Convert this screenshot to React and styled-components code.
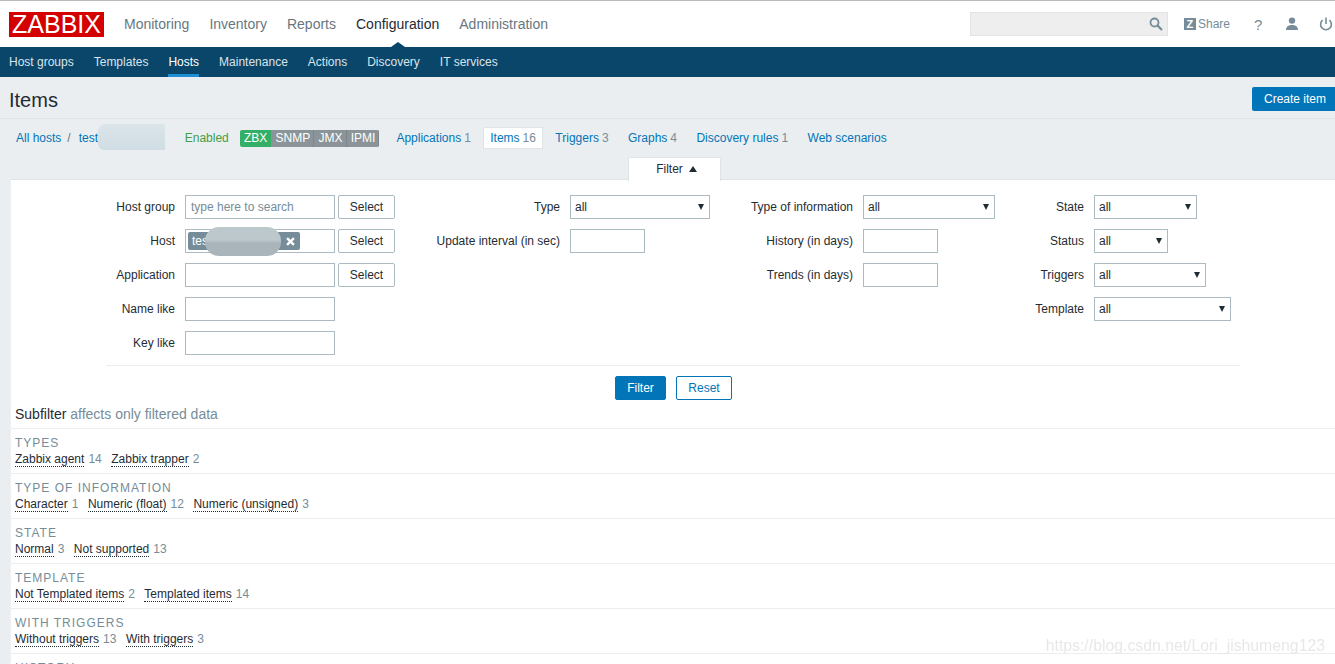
import styled, {createGlobalStyle} from 'styled-components'

const GlobalStyle = createGlobalStyle`
  html, body {
    margin: 0;
    height: 664px;
    overflow: hidden;
    background: #ebeef0;
    font-family: "Liberation Sans", Arial, sans-serif;
    font-size: 12px;
    color: #1f2c33;
  }
`

const mainNav = [
  {label: 'Monitoring'},
  {label: 'Inventory'},
  {label: 'Reports'},
  {label: 'Configuration', active: true},
  {label: 'Administration'},
]

const subNav = ['Host groups', 'Templates', 'Hosts', 'Maintenance', 'Actions', 'Discovery', 'IT services']

const hostTabs = [
  {label: 'Applications', count: 1},
  {label: 'Items', count: 16, active: true},
  {label: 'Triggers', count: 3},
  {label: 'Graphs', count: 4},
  {label: 'Discovery rules', count: 1},
  {label: 'Web scenarios'},
]

const subfilters = [
  {title: 'Types', items: [['Zabbix agent', 14], ['Zabbix trapper', 2]]},
  {title: 'Type of information', items: [['Character', 1], ['Numeric (float)', 12], ['Numeric (unsigned)', 3]]},
  {title: 'State', items: [['Normal', 3], ['Not supported', 13]]},
  {title: 'Template', items: [['Not Templated items', 2], ['Templated items', 14]]},
  {title: 'With triggers', items: [['Without triggers', 13], ['With triggers', 3]]},
  {title: 'History', items: []},
]

const SearchIcon = () => (
  <svg width="14" height="14" viewBox="0 0 14 14" fill="none" stroke="#768d99" strokeWidth="1.8">
    <circle cx="5.5" cy="5.5" r="4" />
    <path d="M8.6 8.6 L13 13" strokeWidth="2.2" />
  </svg>
)

const UserIcon = () => (
  <svg width="14" height="14" viewBox="0 0 14 14" fill="#768d99">
    <circle cx="7" cy="3.6" r="3.2" />
    <path d="M1 13 C1 9.4 3.6 8 7 8 C10.4 8 13 9.4 13 13 Z" />
  </svg>
)

const PowerIcon = () => (
  <svg width="14" height="14" viewBox="0 0 14 14" fill="none" stroke="#768d99" strokeWidth="1.6">
    <path d="M3.6 3.2 A5.4 5.4 0 1 0 10.4 3.2" />
    <path d="M7 0.5 V7" />
  </svg>
)

const CloseIcon = () => (
  <svg width="9" height="9" viewBox="0 0 10 10" stroke="#ffffff" strokeWidth="2.6">
    <path d="M1.2 1.2 L8.8 8.8 M8.8 1.2 L1.2 8.8" />
  </svg>
)

const App = () => (
  <Page>
    <GlobalStyle />
    <TopBar>
      <Logo>ZABBIX</Logo>
      <MainNav>
        {mainNav.map(item => (
          <MainNavItem key={item.label} $active={item.active}>
            {item.label}
          </MainNavItem>
        ))}
      </MainNav>
      <TopTools>
        <SearchBox>
          <SearchIcon />
        </SearchBox>
        <ShareLink>
          <ShareMark>Z</ShareMark>
          Share
        </ShareLink>
        <HelpLink>?</HelpLink>
        <ToolIcon $left={23}>
          <UserIcon />
        </ToolIcon>
        <ToolIcon $left={20}>
          <PowerIcon />
        </ToolIcon>
      </TopTools>
    </TopBar>

    <SubNav>
      {subNav.map(label => (
        <SubNavItem key={label} $active={label === 'Hosts'}>
          {label}
        </SubNavItem>
      ))}
    </SubNav>

    <Header>
      <Title>Items</Title>
      <CreateButton>Create item</CreateButton>
    </Header>

    <Breadcrumbs>
      <Link>All hosts</Link>
      <Slash>/</Slash>
      <HostCrumb>
        <Link>test</Link>
        <CrumbSmudge />
      </HostCrumb>
      <EnabledText>Enabled</EnabledText>
      <Badges>
        <Badge $on>ZBX</Badge>
        <Badge>SNMP</Badge>
        <Badge>JMX</Badge>
        <Badge>IPMI</Badge>
      </Badges>
      <HostTabs>
        {hostTabs.map(tab => (
          <HostTab key={tab.label} $active={tab.active}>
            {tab.label}
            {tab.count && <TabCount>{tab.count}</TabCount>}
          </HostTab>
        ))}
      </HostTabs>
    </Breadcrumbs>

    <FilterTabRow>
      <FilterTab>
        Filter
        <UpCaret />
      </FilterTab>
    </FilterTabRow>

    <Panel>
      <FilterForm>
        <FormColumn $label={69} $indent={95} $width={289}>
          <Label>Host group</Label>
          <ControlRow>
            <TextInput placeholder="type here to search" readOnly />
            <SelectButton>Select</SelectButton>
          </ControlRow>
          <Label>Host</Label>
          <ControlRow>
            <ChipInput>
              <Chip>
                tes
                <CloseIcon />
              </Chip>
              <ChipSmudge />
            </ChipInput>
            <SelectButton>Select</SelectButton>
          </ControlRow>
          <Label>Application</Label>
          <ControlRow>
            <TextInput readOnly />
            <SelectButton>Select</SelectButton>
          </ControlRow>
          <Label>Name like</Label>
          <ControlRow>
            <TextInput readOnly />
          </ControlRow>
          <Label>Key like</Label>
          <ControlRow>
            <TextInput readOnly />
          </ControlRow>
        </FormColumn>

        <FormColumn $label={165} $width={315}>
          <Label>Type</Label>
          <ControlRow>
            <SelectBox $w={140}>all</SelectBox>
          </ControlRow>
          <Label>Update interval (in sec)</Label>
          <ControlRow>
            <TextInput $w={75} readOnly />
          </ControlRow>
        </FormColumn>

        <FormColumn $label={143} $width={285}>
          <Label>Type of information</Label>
          <ControlRow>
            <SelectBox $w={132}>all</SelectBox>
          </ControlRow>
          <Label>History (in days)</Label>
          <ControlRow>
            <TextInput $w={75} readOnly />
          </ControlRow>
          <Label>Trends (in days)</Label>
          <ControlRow>
            <TextInput $w={75} readOnly />
          </ControlRow>
        </FormColumn>

        <FormColumn $label={89} $width={236}>
          <Label>State</Label>
          <ControlRow>
            <SelectBox $w={103}>all</SelectBox>
          </ControlRow>
          <Label>Status</Label>
          <ControlRow>
            <SelectBox $w={74}>all</SelectBox>
          </ControlRow>
          <Label>Triggers</Label>
          <ControlRow>
            <SelectBox $w={112}>all</SelectBox>
          </ControlRow>
          <Label>Template</Label>
          <ControlRow>
            <SelectBox $w={137}>all</SelectBox>
          </ControlRow>
        </FormColumn>
      </FilterForm>

      <FormDivider />

      <FormButtons>
        <FilterButton>Filter</FilterButton>
        <ResetButton>Reset</ResetButton>
      </FormButtons>

      <SubfilterHeading>
        Subfilter <SubfilterHint>affects only filtered data</SubfilterHint>
      </SubfilterHeading>

      {subfilters.map(group => (
        <SubfilterRow key={group.title}>
          <SubfilterTitle>{group.title}</SubfilterTitle>
          <SubfilterItems>
            {group.items.map(([label, count]) => (
              <span key={label}>
                <SubfilterLink>{label}</SubfilterLink>
                <Count>{count}</Count>
              </span>
            ))}
          </SubfilterItems>
        </SubfilterRow>
      ))}
    </Panel>

    <Watermark>https://blog.csdn.net/Lori_jishumeng123</Watermark>
  </Page>
)

export default App

const Page = styled.div`
  position: relative;
  height: 664px;
  overflow: hidden;
`

const TopBar = styled.header`
  display: flex;
  align-items: center;
  height: 46px;
  box-sizing: content-box;
  border-top: 1px solid #bbbbbb;
  background: #ffffff;
  padding-left: 9px;
`

const Logo = styled.div`
  width: 95px;
  height: 25px;
  margin-top: 1px;
  background: #d40000;
  color: #ffffff;
  font-size: 25px;
  line-height: 25px;
  text-align: center;
`

const MainNav = styled.nav`
  display: flex;
  gap: 20px;
  margin-left: 20px;
`

const MainNavItem = styled.span`
  position: relative;
  font-size: 14px;
  line-height: 46px;
  color: ${p => (p.$active ? '#1f2c33' : '#68777f')};

  ${p =>
    p.$active &&
    `
    &::after {
      content: '';
      position: absolute;
      left: 50%;
      bottom: 0;
      margin-left: -7px;
      border-left: 7px solid transparent;
      border-right: 7px solid transparent;
      border-bottom: 5px solid #0a466a;
    }
  `}
`

const TopTools = styled.div`
  display: flex;
  align-items: center;
  margin-left: auto;
  padding-right: 2px;
`

const SearchBox = styled.div`
  display: flex;
  align-items: center;
  justify-content: flex-end;
  box-sizing: border-box;
  width: 198px;
  height: 24px;
  padding-right: 4px;
  background: #eeeeee;
  border: 1px solid #e3e3e3;
`

const ShareLink = styled.span`
  display: flex;
  align-items: center;
  margin-left: 16px;
  color: #768d99;
`

const ShareMark = styled.span`
  width: 12px;
  height: 12px;
  margin-right: 2px;
  background: #768d99;
  color: #ffffff;
  font-size: 11px;
  font-weight: 700;
  line-height: 12px;
  text-align: center;
`

const HelpLink = styled.span`
  margin-left: 24px;
  width: 8px;
  color: #768d99;
  font-size: 15px;
`

const ToolIcon = styled.span`
  display: flex;
  margin-left: ${p => p.$left}px;
`

const SubNav = styled.nav`
  display: flex;
  gap: 20px;
  height: 30px;
  padding-left: 9px;
  background: #0a466a;
`

const SubNavItem = styled.span`
  line-height: 30px;
  color: ${p => (p.$active ? '#ffffff' : '#d9e4ea')};
  box-shadow: ${p => (p.$active ? 'inset 0 -3px 0 #1f8fd4' : 'none')};
`

const Header = styled.div`
  display: flex;
  align-items: center;
  justify-content: space-between;
  height: 41px;
  padding-left: 9px;
  border-bottom: 1px solid #dfe4e7;
`

const Title = styled.h1`
  margin: 5px 0 0;
  font-size: 20px;
  font-weight: 400;
  color: #1f2c33;
`

const CreateButton = styled.button`
  box-sizing: border-box;
  width: 83px;
  height: 24px;
  margin-top: 2px;
  padding: 0 0 0 3px;
  background: #0275b8;
  border: 0;
  border-radius: 2px 0 0 2px;
  color: #ffffff;
  font: 12px "Liberation Sans", Arial, sans-serif;
`

const Breadcrumbs = styled.div`
  display: flex;
  align-items: center;
  height: 38px;
  padding-left: 16px;
`

const Link = styled.span`
  color: #0275b8;
`

const Slash = styled.span`
  margin: 0 8px 0 6px;
  color: #68777f;
`

const HostCrumb = styled.div`
  position: relative;
  width: 86px;
`

const CrumbSmudge = styled.div`
  position: absolute;
  left: 19px;
  top: -7px;
  width: 67px;
  height: 26px;
  background: linear-gradient(#dbe5ea, #d0dde4);
  border-radius: 8px 2px 0 6px;
`

const EnabledText = styled.span`
  margin-left: 20px;
  color: #429e47;
`

const Badges = styled.div`
  display: flex;
  height: 17px;
  margin-left: 11px;
  border-radius: 2px;
  overflow: hidden;
`

const Badge = styled.span`
  padding: 0 4px 0 4.25px;
  background: ${p => (p.$on ? '#34af67' : '#8b9599')};
  box-shadow: inset -1px 0 0 ${p => (p.$on ? '#34af67' : '#7d868c')};
  color: #ffffff;
  line-height: 17px;
`

const HostTabs = styled.div`
  display: flex;
  align-items: center;
  gap: 5.4px;
  margin-left: 10px;
`

const HostTab = styled.span`
  box-sizing: border-box;
  height: 22px;
  padding: 0 6px;
  line-height: 20px;
  color: #0275b8;
  background: ${p => (p.$active ? '#ffffff' : 'transparent')};
  border: 1px solid ${p => (p.$active ? '#dfe4e7' : 'transparent')};
`

const Count = styled.span`
  margin-left: 4px;
  color: #768d99;
`

const TabCount = styled(Count)`
  margin-left: 3px;
`

const FilterTabRow = styled.div`
  position: relative;
  z-index: 1;
  display: flex;
  height: 23px;
  padding-left: 628px;
  margin-bottom: -1px;
`

const FilterTab = styled.div`
  display: flex;
  align-items: center;
  justify-content: center;
  box-sizing: border-box;
  width: 93px;
  height: 24px;
  padding: 0 0 2px 4px;
  background: #ffffff;
  border: 1px solid #dfe4e7;
  border-bottom: 0;
  border-radius: 2px 2px 0 0;
`

const UpCaret = styled.i`
  margin-left: 6px;
  border-left: 4px solid transparent;
  border-right: 4px solid transparent;
  border-bottom: 6px solid #1f2c33;
`

const Panel = styled.section`
  margin-left: 10px;
  height: 500px;
  background: #ffffff;
  border-top: 1px solid #dfe4e7;
  border-left: 1px solid #eef1f3;
`

const FilterForm = styled.div`
  display: flex;
  align-items: flex-start;
  padding-top: 15px;
`

const FormColumn = styled.div`
  display: grid;
  grid-template-columns: ${p => p.$label}px 1fr;
  column-gap: 10px;
  row-gap: 10px;
  width: ${p => p.$width}px;
  margin-left: ${p => p.$indent || 0}px;
  flex: none;
`

const Label = styled.label`
  height: 24px;
  line-height: 24px;
  text-align: right;
  white-space: nowrap;
`

const ControlRow = styled.div`
  display: flex;
  gap: 3px;
  height: 24px;
`

const TextInput = styled.input`
  box-sizing: border-box;
  width: ${p => p.$w || 150}px;
  height: 24px;
  padding: 0 5px;
  border: 1px solid #acbbc2;
  outline: none;
  background: #ffffff;
  font: 12px "Liberation Sans", Arial, sans-serif;
  color: #1f2c33;

  &::placeholder {
    color: #768d99;
    opacity: 1;
  }
`

const ChipInput = styled.div`
  position: relative;
  display: flex;
  align-items: center;
  box-sizing: border-box;
  width: 150px;
  height: 24px;
  padding-left: 2px;
  border: 1px solid #acbbc2;
`

const Chip = styled.span`
  display: flex;
  align-items: center;
  justify-content: space-between;
  box-sizing: border-box;
  width: 112px;
  height: 18px;
  padding: 0 5px 0 4px;
  background: #768d99;
  border-radius: 2px;
  color: #ffffff;
`

const ChipSmudge = styled.div`
  position: absolute;
  left: 19px;
  top: -3px;
  width: 76px;
  height: 29px;
  background: linear-gradient(#bdc8cd 45%, #a9b5ba 55%);
  border-radius: 14px;
`

const SelectButton = styled.button`
  box-sizing: border-box;
  width: 57px;
  height: 24px;
  padding: 0;
  background: #ffffff;
  border: 1px solid #acbbc2;
  border-radius: 2px;
  color: #1f2c33;
  font: 12px "Liberation Sans", Arial, sans-serif;
`

const SelectBox = styled.div`
  position: relative;
  box-sizing: border-box;
  width: ${p => p.$w}px;
  height: 24px;
  padding-left: 4px;
  border: 1px solid #acbbc2;
  line-height: 22px;

  &::after {
    content: '';
    position: absolute;
    right: 5px;
    top: 8px;
    border-left: 3.5px solid transparent;
    border-right: 3.5px solid transparent;
    border-top: 6px solid #1f2c33;
  }
`

const FormDivider = styled.div`
  height: 1px;
  margin: 10px 95px 0 95px;
  background: #ebeef0;
`

const FormButtons = styled.div`
  display: flex;
  gap: 10px;
  margin: 10px 0 0 604px;
`

const FilterButton = styled.button`
  box-sizing: border-box;
  width: 51px;
  height: 24px;
  padding: 0;
  background: #0275b8;
  border: 1px solid #0275b8;
  border-radius: 2px;
  color: #ffffff;
  font: 12px "Liberation Sans", Arial, sans-serif;
`

const ResetButton = styled(FilterButton)`
  width: 56px;
  background: #ffffff;
  color: #0275b8;
`

const SubfilterHeading = styled.div`
  height: 28px;
  padding-left: 4px;
  font-size: 14px;
  line-height: 28px;
  border-bottom: 1px solid #ebeef0;
`

const SubfilterHint = styled.span`
  color: #768d99;
`

const SubfilterRow = styled.div`
  box-sizing: border-box;
  height: 45px;
  padding: 7px 0 0 4px;
  border-bottom: 1px solid #ebeef0;
`

const SubfilterTitle = styled.div`
  height: 15px;
  font-size: 12px;
  line-height: 15px;
  letter-spacing: 1px;
  text-transform: uppercase;
  color: #768d99;
`

const SubfilterItems = styled.div`
  display: flex;
  gap: 9.5px;
  margin-top: 1px;
  line-height: 15px;
`

const SubfilterLink = styled.span`
  border-bottom: 1px dotted #1f2c33;
`

const Watermark = styled.div`
  position: absolute;
  right: 10px;
  bottom: 8px;
  font-size: 15.8px;
  line-height: 20px;
  color: #e8e8e8;
  filter: blur(0.5px);
`
